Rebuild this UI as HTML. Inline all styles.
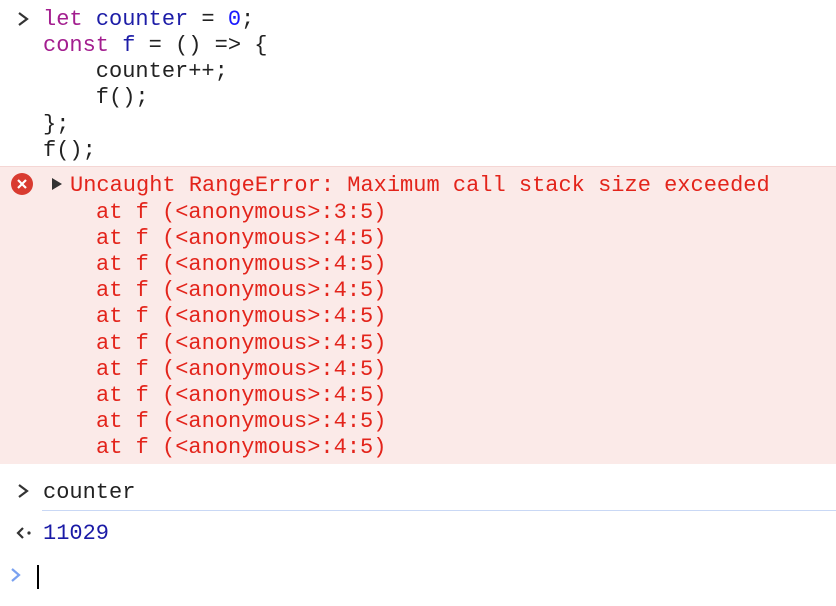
<!DOCTYPE html>
<html><head><style>
body{margin:0;width:836px;height:606px;background:#fff;overflow:hidden;font-family:"Liberation Mono",monospace;font-size:22px;position:relative}
.l{position:absolute;white-space:pre;line-height:26px}
.err{position:absolute;left:0;top:166px;width:836px;height:297px;background:#fbeae8;border-top:1px solid #f5d6d4}
.r{color:#e3241b}
.k{color:#a31e8f}.v{color:#1d1da7}.n{color:#1a1aa6}.t{color:#222}
</style></head><body>
<svg style="position:absolute;left:16px;top:11px" width="14" height="16"><path d="M3 2 L11 8 L3 14" fill="none" stroke="#333" stroke-width="2.2"/></svg>
<div class="l t" style="left:43px;top:7px"><span class="k">let</span> <span class="v">counter</span> = <span style="color:#1a1aff">0</span>;</div>
<div class="l t" style="left:43px;top:33px"><span class="k">const</span> <span class="v">f</span> = () =&gt; {</div>
<div class="l t" style="left:43px;top:59px">    counter++;</div>
<div class="l t" style="left:43px;top:85px">    f();</div>
<div class="l t" style="left:43px;top:112px">};</div>
<div class="l t" style="left:43px;top:138px">f();</div>
<div class="err"></div>
<svg style="position:absolute;left:11px;top:173px" width="22" height="22"><circle cx="11" cy="11" r="11" fill="#d93b30"/><path d="M7 7L15 15M15 7L7 15" stroke="#fff" stroke-width="2.2"/></svg>
<svg style="position:absolute;left:51px;top:177px" width="12" height="14"><path d="M1 1L11 7L1 13Z" fill="#333"/></svg>
<div class="l r" style="left:70px;top:173px">Uncaught RangeError: Maximum call stack size exceeded</div>
<div class="l r" style="left:96px;top:200px">at f (&lt;anonymous&gt;:3:5)</div>
<div class="l r" style="left:96px;top:226px">at f (&lt;anonymous&gt;:4:5)</div>
<div class="l r" style="left:96px;top:252px">at f (&lt;anonymous&gt;:4:5)</div>
<div class="l r" style="left:96px;top:278px">at f (&lt;anonymous&gt;:4:5)</div>
<div class="l r" style="left:96px;top:304px">at f (&lt;anonymous&gt;:4:5)</div>
<div class="l r" style="left:96px;top:331px">at f (&lt;anonymous&gt;:4:5)</div>
<div class="l r" style="left:96px;top:357px">at f (&lt;anonymous&gt;:4:5)</div>
<div class="l r" style="left:96px;top:383px">at f (&lt;anonymous&gt;:4:5)</div>
<div class="l r" style="left:96px;top:409px">at f (&lt;anonymous&gt;:4:5)</div>
<div class="l r" style="left:96px;top:435px">at f (&lt;anonymous&gt;:4:5)</div>
<svg style="position:absolute;left:16px;top:483px" width="14" height="16"><path d="M3 2 L11 8 L3 14" fill="none" stroke="#333" stroke-width="2.2"/></svg>
<div class="l t" style="left:43px;top:480px">counter</div>
<div style="position:absolute;left:42px;top:510px;width:794px;height:1px;background:#c9d8f5"></div>
<svg style="position:absolute;left:15px;top:525px" width="18" height="16"><path d="M8 3 L3 8 L8 13" fill="none" stroke="#333" stroke-width="2.2"/><circle cx="14" cy="8" r="1.6" fill="#333"/></svg>
<div class="l n" style="left:43px;top:521px">11029</div>
<svg style="position:absolute;left:10px;top:567px" width="12" height="16"><path d="M2 2 L9 8 L2 14" fill="none" stroke="#7aa1f0" stroke-width="2.2"/></svg>
<div style="position:absolute;left:37px;top:565px;width:2px;height:24px;background:#000"></div>
</body></html>
